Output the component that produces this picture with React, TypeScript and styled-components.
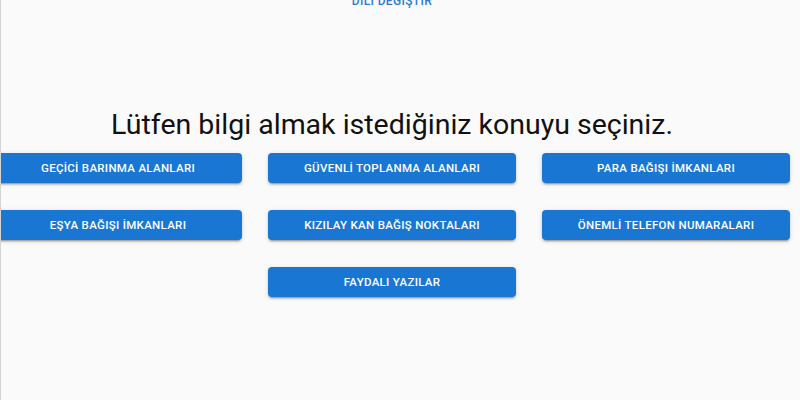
import React from "react";
import styled, { createGlobalStyle } from "styled-components";

const Global = createGlobalStyle`
  html, body { margin: 0; padding: 0; background: #fafafa; }
  body { font-family: Roboto, "Noto Sans", sans-serif; overflow: hidden; }
`;

const Page = styled.div`
  width: 800px;
  height: 400px;
  box-sizing: border-box;
  border-left: 1px solid #d4d4d4;
  background: #fafafa;
  overflow: hidden;
`;

const Content = styled.div`
  width: 782px;
  display: flex;
  flex-direction: column;
  align-items: center;
`;

const LangButton = styled.button`
  margin-top: -12px;
  background: transparent;
  border: none;
  padding: 6px 8px;
  font-family: Roboto, sans-serif;
  font-weight: 500;
  font-size: 12px;
  line-height: 14px;
  letter-spacing: 0.35px;
  color: #2f7bcc;
  text-transform: uppercase;
  cursor: pointer;
`;

const Title = styled.h1`
  margin: 93.5px 0 12px;
  font-family: Roboto, sans-serif;
  font-weight: 400;
  font-size: 28.5px;
  line-height: 33.4px;
  color: #111;
  white-space: nowrap;
`;

const Grid = styled.div`
  display: flex;
  justify-content: center;
  width: 100%;
`;

const GridInner = styled.div`
  display: grid;
  grid-template-columns: repeat(3, 247.5px);
  column-gap: 26.5px;
  row-gap: 27px;
  flex-shrink: 0;
`;

const TopicButton = styled.button<{ $col?: number }>`
  grid-column: ${(p) => p.$col ?? "auto"};
  height: 30px;
  border: none;
  border-radius: 4px;
  background: #1976d2;
  color: #fff;
  font-family: Roboto, sans-serif;
  font-weight: 500;
  font-size: 11.5px;
  letter-spacing: 0.3px;
  text-transform: uppercase;
  box-shadow: 0 3px 1px -2px rgba(0,0,0,0.2), 0 2px 2px 0 rgba(0,0,0,0.14), 0 1px 5px 0 rgba(0,0,0,0.12);
  cursor: pointer;
`;

const topics = [
  "GEÇİCİ BARINMA ALANLARI",
  "GÜVENLİ TOPLANMA ALANLARI",
  "PARA BAĞIŞI İMKANLARI",
  "EŞYA BAĞIŞI İMKANLARI",
  "KIZILAY KAN BAĞIŞ NOKTALARI",
  "ÖNEMLİ TELEFON NUMARALARI",
];

export default function App() {
  return (
    <Page>
      <Global />
      <Content>
        <LangButton>DİLİ DEĞİŞTİR</LangButton>
        <Title>Lütfen bilgi almak istediğiniz konuyu seçiniz.</Title>
        <Grid>
          <GridInner>
            {topics.map((t) => (
              <TopicButton key={t}>{t}</TopicButton>
            ))}
            <TopicButton $col={2}>FAYDALI YAZILAR</TopicButton>
          </GridInner>
        </Grid>
      </Content>
    </Page>
  );
}
